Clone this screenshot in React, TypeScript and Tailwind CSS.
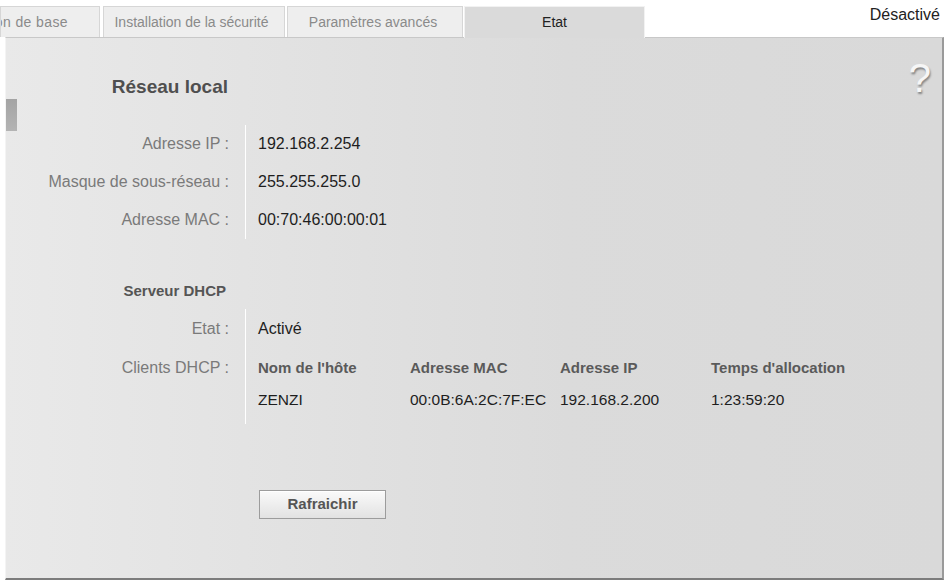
const font = "font-['Liberation_Sans',Arial,sans-serif]";

type Row = { label: string; value: string };

const lanRows: Row[] = [
  { label: "Adresse IP :", value: "192.168.2.254" },
  { label: "Masque de sous-réseau :", value: "255.255.255.0" },
  { label: "Adresse MAC :", value: "00:70:46:00:00:01" },
];

const clientCols = "grid grid-cols-[152px_150px_151px_1fr] items-center";

function Tab({ label, className, active }: { label: string; className: string; active?: boolean }) {
  if (active) {
    return (
      <div
        className={`relative z-10 -mb-px flex h-[32px] items-center justify-center border-x border-t border-[#f2f2f2] bg-[#dadada] text-[14px] text-[#222] ${className}`}
      >
        {label}
      </div>
    );
  }
  return (
    <div
      className={`flex h-[31px] items-center overflow-hidden whitespace-nowrap border-x border-t border-[#d6d6d6] bg-[#eeeeee] text-[14px] text-[#8a8a8a] ${className}`}
    >
      {label}
    </div>
  );
}

export default function App() {
  return (
    <div className={`h-[582px] w-[948px] overflow-hidden bg-white ${font}`}>
      {/* onglets */}
      <div className="flex h-[37px] items-end">
        <Tab label="Installation de base" className="w-[100px] justify-end pr-[31px] tracking-[0.4px]" />
        <Tab label="Installation de la sécurité" className="ml-[3px] w-[182px] justify-center pr-[5px]" />
        <Tab label="Paramètres avancés" className="ml-[2px] w-[176px] justify-center pr-[4px]" />
        <Tab label="Etat" className="ml-px w-[181px]" active />
        <div className="flex-1 self-start pr-[8px] pt-[6px] text-right text-[16px] leading-[18px] text-[#222]">
          Désactivé
        </div>
      </div>

      {/* panneau */}
      <div className="relative ml-[5px] mr-[4px] h-[543px] border-t border-l border-t-[#c8c8c8] border-l-[#f4f4f4] border-r-2 border-r-[#9a9a9a] border-b-2 border-b-[#7c7c7c] bg-linear-to-r from-[#e9e9e9] via-[#dbdbdb] via-60% to-[#d9d9d9]">
        <div className="absolute left-0 top-[61px] h-[32px] w-[11px] bg-linear-to-b from-[#a4a4a4] to-[#b4b4b4]" />
        <div className="absolute right-[11px] top-[20px] text-[40px] leading-none text-[#f6f6f6] [text-shadow:1px_2px_2px_rgba(0,0,0,0.4)]">
          ?
        </div>

        <div className="grid grid-cols-[239px_1fr] pt-[30px]">
          <div className="flex h-[38px] items-center justify-end pr-[17px] text-[19px] font-bold text-[#4f4f4f]">
            Réseau local
          </div>
          <div />

          <div className="col-span-2 h-[19px]" />

          {lanRows.map((r) => (
            <div key={r.label} className="contents">
              <div className="flex h-[38px] items-center justify-end pr-[16px] text-[16px] text-[#7a7a7a]">
                {r.label}
              </div>
              <div className="flex h-[38px] items-center border-l border-white pl-[12px] text-[16px] text-[#1e1e1e]">
                {r.value}
              </div>
            </div>
          ))}

          <div className="col-span-2 h-[35px]" />

          <div className="flex h-[35px] items-center justify-end pr-[19px] text-[15px] font-bold text-[#555]">
            Serveur DHCP
          </div>
          <div />

          <div className="flex h-[40px] items-center justify-end pr-[16px] text-[16px] text-[#7a7a7a]">Etat :</div>
          <div className="flex h-[40px] items-center border-l border-white pl-[12px] text-[16px] text-[#1e1e1e]">
            Activé
          </div>

          <div className="flex h-[38px] items-center justify-end pr-[16px] text-[16px] text-[#7a7a7a]">
            Clients DHCP :
          </div>
          <div className={`h-[38px] border-l border-white pl-[12px] text-[15px] font-bold text-[#5a5a5a] ${clientCols}`}>
            <span>Nom de l'hôte</span>
            <span>Adresse MAC</span>
            <span>Adresse IP</span>
            <span>Temps d'allocation</span>
          </div>

          <div />
          <div className={`h-[37px] border-l border-white pb-[11px] pl-[12px] text-[15.5px] text-[#1e1e1e] ${clientCols}`}>
            <span>ZENZI</span>
            <span>00:0B:6A:2C:7F:EC</span>
            <span>192.168.2.200</span>
            <span>1:23:59:20</span>
          </div>

          <div />
          <div className="pl-[14px] pt-[66px]">
            <button className="h-[29px] w-[127px] border border-[#9c9c9c] bg-linear-to-b from-[#fafafa] via-[#eeeeee] to-[#e2e2e2] text-[15px] font-bold text-[#555] shadow-[inset_0_1px_0_#ffffff]">
              Rafraichir
            </button>
          </div>
        </div>
      </div>
    </div>
  );
}
